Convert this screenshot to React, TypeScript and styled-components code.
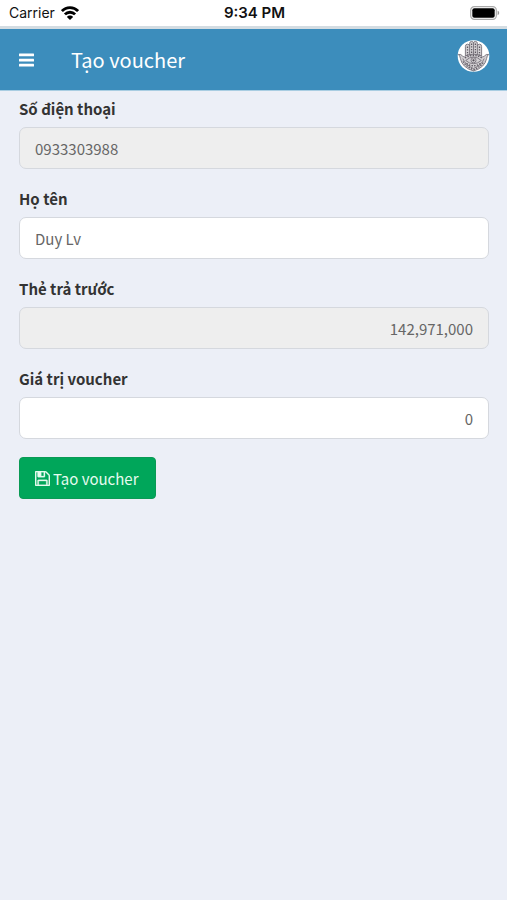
import React, { useState } from "react";
import styled, { createGlobalStyle } from "styled-components";

const GlobalStyle = createGlobalStyle`
  * { box-sizing: border-box; }
  body {
    margin: 0;
    background: #eceff7;
    color: #333;
    font-family: "Noto Sans CJK SC", "Noto Sans", sans-serif;
    font-size: 15px;
  }
`;

const Page = styled.div`
  min-height: 100vh;
  background: #eceff7;
`;

const StatusBar = styled.div`
  display: grid;
  grid-template-columns: 1fr auto 1fr;
  align-items: center;
  height: 29px;
  padding: 0 7px 0 9px;
  background: #fff;
  border-bottom: 3px solid #d3dce2;
  color: #111;
  font-family: Inter, sans-serif;
  font-size: 14px;
  line-height: 26px;
`;

const Carrier = styled.div`
  display: flex;
  align-items: center;
  gap: 6px;
`;

const Clock = styled.div`
  font-size: 15px;
  font-weight: 600;
`;

const Power = styled.div`
  display: flex;
  justify-content: flex-end;
`;

const Header = styled.header`
  display: flex;
  align-items: center;
  height: 62px;
  padding: 0 17px 0 19px;
  background: #3c8dbc;
  border-bottom: 1px solid #a9cde2;
  color: #fff;
`;

const MenuButton = styled.button`
  display: flex;
  padding: 0;
  border: 0;
  background: none;
  color: inherit;
  cursor: pointer;
`;

const Title = styled.h1`
  flex: 1;
  margin: 0 0 0 37px;
  font-size: 20px;
  font-weight: 400;
  line-height: 26px;
`;

const AvatarLink = styled.a`
  display: flex;
  margin-bottom: 7px;
`;

const Form = styled.form`
  display: flex;
  flex-direction: column;
  align-items: flex-start;
  padding: 6px 18px 0 19px;
`;

const Field = styled.div`
  display: flex;
  flex-direction: column;
  width: 100%;
  margin-bottom: 18px;
`;

const Label = styled.label`
  margin-bottom: 6px;
  font-weight: 700;
  line-height: 24px;
`;

const Input = styled.input<{ $align?: "left" | "right" }>`
  width: 100%;
  height: 42px;
  padding: 0 15px;
  border: 1px solid #d5d8de;
  border-radius: 7px;
  background: #fff;
  color: #666;
  font: inherit;
  text-align: ${(p) => p.$align ?? "left"};
  outline: none;

  &:read-only { background: #eee; }
  &:focus { border-color: #3c8dbc; }
`;

const SubmitButton = styled.button`
  display: flex;
  align-items: center;
  gap: 3px;
  height: 42px;
  padding: 0 16px 0 15px;
  border: 1px solid #0a9a55;
  border-radius: 4px;
  background: #00a65a;
  color: #e6fbef;
  font: inherit;
  cursor: pointer;
`;

const WifiIcon = () => (
  <svg width="18" height="14" viewBox="0 0 18 14" fill="none" stroke="#000" strokeWidth="2.8" aria-hidden="true">
    <path d="M.9 5.100C5.300.4 12.700.4 17.100 5.100" />
    <path d="M3.900 8.400c2.800-2.900 7.400-2.900 10.200 0" />
    <path d="M9 14 5.900 10.900c1.700-1.800 4.500-1.800 6.200 0Z" fill="#000" stroke="none" />
  </svg>
);

const BatteryIcon = () => (
  <svg width="30" height="14" viewBox="0 0 30 14" aria-hidden="true">
    <rect x=".7" y=".7" width="25.6" height="12.6" rx="3.6" fill="#fff" stroke="#aaa" strokeWidth="1.2" />
    <rect x="2.3" y="2.3" width="22.4" height="9.4" rx="2" fill="#000" />
    <path d="M27.6 4.8c2.1.6 2.1 3.8 0 4.4Z" fill="#999" />
  </svg>
);

const BarsIcon = () => (
  <svg width="15" height="14" viewBox="0 0 15 14" fill="currentColor" aria-hidden="true">
    <rect y=".6" width="15" height="2.7" rx=".5" />
    <rect y="5.7" width="15" height="2.7" rx=".5" />
    <rect y="10.8" width="15" height="2.7" rx=".5" />
  </svg>
);

const FloppyIcon = () => (
  <svg width="15" height="15" viewBox="0 128 1536 1536" fill="currentColor" stroke="currentColor" strokeWidth="30" aria-hidden="true">
    <path d="M384 1536h768v-384h-768v384zM1280 1536h128v-896q0-14-10-38.5t-20-34.5l-281-281q-10-10-34-20t-39-10v416q0 40-28 68t-68 28h-576q-40 0-68-28t-28-68v-416h-128v1280h128v-416q0-40 28-68t68-28h832q40 0 68 28t28 68v416zM896 608v-320q0-13-9.5-22.5t-22.5-9.5h-192q-13 0-22.5 9.5t-9.5 22.5v320q0 13 9.5 22.5t22.5 9.5h192q13 0 22.5-9.5t9.5-22.5zM1536 640v928q0 40-28 68t-68 28h-1344q-40 0-68-28t-28-68v-1344q0-40 28-68t68-28h928q40 0 88 20t76 48l280 280q28 28 48 76t20 88z" />
  </svg>
);

const HamsaAvatar = () => (
  <svg width="33" height="32" viewBox="0 0 33 32" aria-hidden="true">
    <circle cx="16.5" cy="16" r="15.8" fill="#fff" />
    <path
      d="M8.400 6.500q0-2.300 2-2.300t2.200 1.600V3.400q0-1.900 1.900-1.900t2 1.300q.1-1.300 2-1.300t1.900 1.900v2.400q.2-1.600 2.200-1.600t2 2.300v9.700q1 1.600 2.700 0 1.600-2.300 4.400-1.800-1.800 1.400-2.100 4.100Q28 27.500 16.500 31 5 27.500 3.400 18.500 3.100 15.800 1.300 14.400q2.800-.5 4.400 1.800 1.700 1.600 2.700 0Z"
      fill="#d3d0d3"
      stroke="#77727a"
      strokeWidth=".9"
    />
    <g fill="none" stroke="#77727a" strokeWidth=".9">
      <path d="M12.600 5v10.500M16.500 2.500v12.500M20.400 5v10.500" />
      <path d="M8.500 15.800q8-3.200 16 0M8.700 20.500q7.800-7 15.600 0-7.800 6.500-15.600 0ZM5.800 18.500q2.500 6.500 10.700 10 8.200-3.500 10.700-10" />
      <circle cx="16.500" cy="20.300" r="2.500" />
    </g>
    <g stroke="#5c5760" strokeWidth="1.300" strokeDasharray="1.400 1.300" fill="none">
      <path d="M10.500 6.500v9M14.600 3.500v11M18.400 3.500v11M22.500 6.500v9" />
      <path d="M6 21.500q3.500 5.500 10.500 8.300 7-2.800 10.500-8.300M8 18q8.500-5 17 0M9.500 23.500q7 4.500 14 0" />
    </g>
    <circle cx="16.500" cy="20.300" r="1.100" fill="#514c55" />
  </svg>
);

export default function App() {
  const [name, setName] = useState("Duy Lv");
  const [amount, setAmount] = useState("0");

  return (
    <Page>
      <GlobalStyle />
      <StatusBar>
        <Carrier>
          Carrier
          <WifiIcon />
        </Carrier>
        <Clock>9:34 PM</Clock>
        <Power>
          <BatteryIcon />
        </Power>
      </StatusBar>
      <Header>
        <MenuButton type="button" aria-label="Menu">
          <BarsIcon />
        </MenuButton>
        <Title>Tạo voucher</Title>
        <AvatarLink href="#profile" aria-label="Tài khoản">
          <HamsaAvatar />
        </AvatarLink>
      </Header>
      <Form onSubmit={(e) => e.preventDefault()}>
        <Field>
          <Label htmlFor="phone">Số điện thoại</Label>
          <Input id="phone" type="tel" value="0933303988" readOnly />
        </Field>
        <Field>
          <Label htmlFor="name">Họ tên</Label>
          <Input id="name" value={name} onChange={(e) => setName(e.target.value)} />
        </Field>
        <Field>
          <Label htmlFor="balance">Thẻ trả trước</Label>
          <Input id="balance" value="142,971,000" readOnly $align="right" />
        </Field>
        <Field>
          <Label htmlFor="amount">Giá trị voucher</Label>
          <Input
            id="amount"
            inputMode="numeric"
            value={amount}
            onChange={(e) => setAmount(e.target.value)}
            $align="right"
          />
        </Field>
        <SubmitButton type="submit">
          <FloppyIcon />
          Tạo voucher
        </SubmitButton>
      </Form>
    </Page>
  );
}
